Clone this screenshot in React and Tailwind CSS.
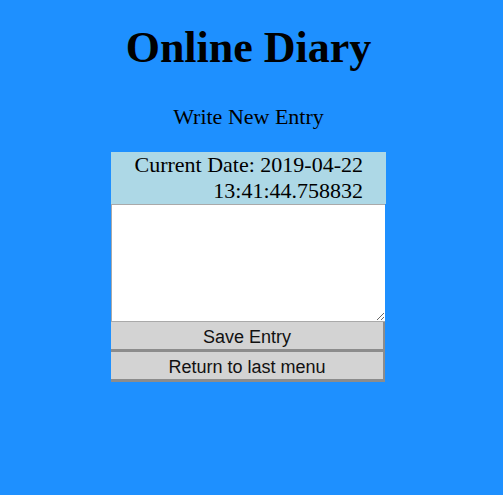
export default function App() {
  return (
    <div className="min-h-[495px] w-full bg-[#1E90FF]" style={{ fontFamily: '"Liberation Serif", serif' }}>
      <div className="w-[497px] flex flex-col items-center">
        <h1 className="mt-[22px] text-[44px] leading-[52px] font-bold text-black">Online Diary</h1>
        <p className="mt-[30px] text-[22px] leading-[26px] text-black">Write New Entry</p>
        <div className="mt-[22px] w-[275px] flex flex-col">
          <div className="bg-[#ADD8E6] text-right pr-[23px] text-[22px] leading-[26px] text-black h-[52px]">
            <div>Current Date: 2019-04-22</div>
            <div>13:41:44.758832</div>
          </div>
          <textarea className="block w-[274px] h-[118px] bg-white border border-[#a9a9a9] border-r-0 resize" />
          <button className="w-[274px] h-[30px] pt-[2px] bg-[#d3d3d3] border-b-[3px] border-r-[2px] border-[#8c8c8c] text-[18px] leading-[22px] text-[#111]" style={{ fontFamily: '"Liberation Sans", Arial, sans-serif' }}>Save Entry</button>
          <button className="w-[274px] h-[30px] pt-[2px] bg-[#d3d3d3] border-b-[3px] border-r-[2px] border-[#8c8c8c] text-[18px] leading-[22px] text-[#111]" style={{ fontFamily: '"Liberation Sans", Arial, sans-serif' }}>Return to last menu</button>
        </div>
      </div>
    </div>
  );
}
